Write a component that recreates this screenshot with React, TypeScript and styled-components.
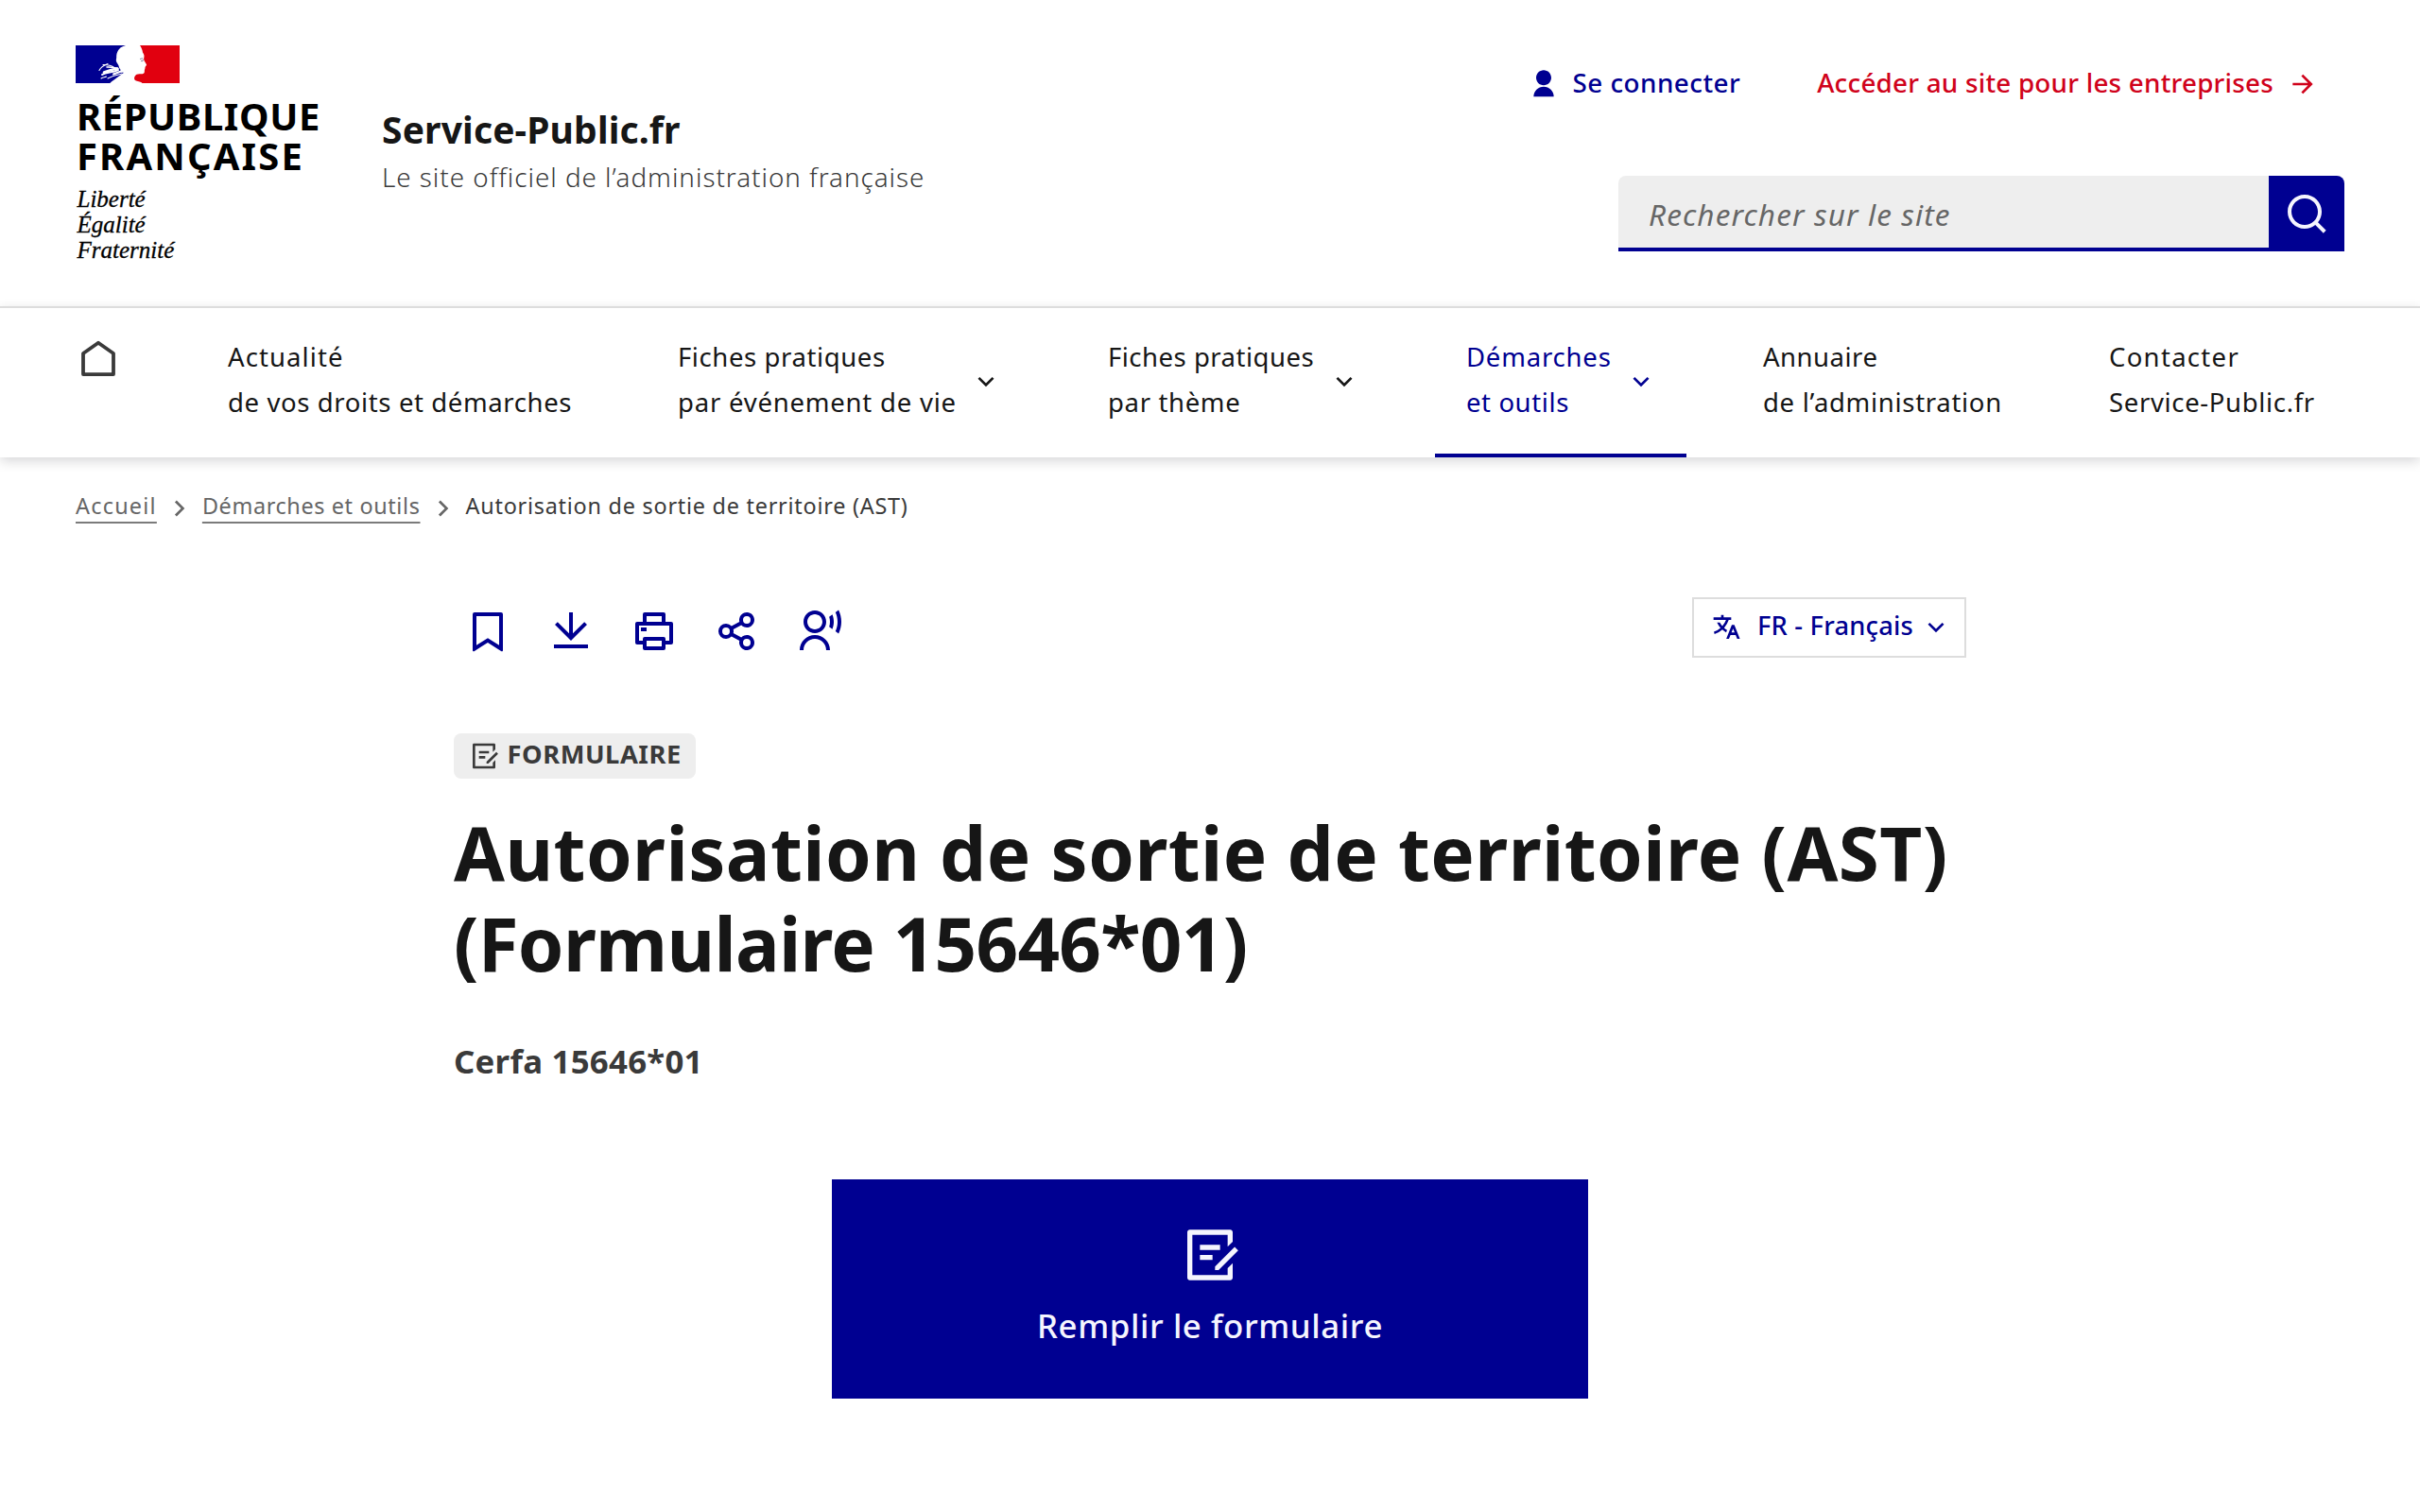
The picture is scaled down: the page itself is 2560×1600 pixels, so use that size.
import React from 'react';
import styled, { createGlobalStyle } from 'styled-components';

const BLUE = '#000091';
const RED = '#d0021b';
const INK = '#161616';
const GREY = '#3a3a3a';

const GlobalStyle = createGlobalStyle`
  *, *::before, *::after { box-sizing: border-box; }
  body {
    margin: 0;
    background: #fff;
    color: ${INK};
    font-family: "Noto Sans", "Open Sans", sans-serif;
    font-size: 27.5px;
    line-height: 48px;
  }
  a { color: inherit; text-decoration: none; }
`;

const Page = styled.div`
  width: 2560px;
  min-height: 1600px;
  background: #fff;
`;

/* ---------- icons ---------- */

const Svg = styled.svg<{ $size: number }>`
  display: block;
  flex: none;
  width: ${(p) => p.$size}px;
  height: ${(p) => p.$size}px;
  fill: currentColor;
`;

const PATHS = {
  user: 'M4 22a8 8 0 1 1 16 0H4Zm8-9c-3.315 0-6-2.685-6-6s2.685-6 6-6 6 2.685 6 6-2.685 6-6 6Z',
  arrow: 'm16.17 11-5.36-5.36 1.41-1.42L20 12l-7.78 7.78-1.41-1.42L16.17 13H4v-2h12.17Z',
  search:
    'M18.031 16.617l4.283 4.282-1.415 1.415-4.282-4.283A8.96 8.96 0 0 1 11 20c-4.968 0-9-4.032-9-9s4.032-9 9-9 9 4.032 9 9a8.96 8.96 0 0 1-1.969 5.617zm-2.006-.742A6.977 6.977 0 0 0 18 11c0-3.868-3.133-7-7-7-3.868 0-7 3.132-7 7 0 3.867 3.132 7 7 7a6.977 6.977 0 0 0 4.875-1.975l.15-.15z',
  down: 'M12 13.17l4.95-4.95 1.41 1.42L12 16 5.64 9.64l1.41-1.42L12 13.17Z',
  right: 'M13.17 12L8.22 7.05l1.42-1.41L16 12l-6.36 6.36-1.42-1.41L13.17 12Z',
  bookmark:
    'M5 2h14a1 1 0 0 1 1 1v19.143a.5.5 0 0 1-.766.424L12 18.03l-7.234 4.536A.5.5 0 0 1 4 22.143V3a1 1 0 0 1 1-1zm13 2H6v15.432l6-3.761 6 3.761V4z',
  download: 'M3 19h18v2H3v-2Zm10-5.828 6.071-6.071 1.414 1.414L12 17 3.515 8.515 4.929 7.1 11 13.17V2h2v11.172Z',
  printer:
    'M6 19H3a1 1 0 0 1-1-1V8a1 1 0 0 1 1-1h3V3a1 1 0 0 1 1-1h10a1 1 0 0 1 1 1v4h3a1 1 0 0 1 1 1v10a1 1 0 0 1-1 1h-3v2a1 1 0 0 1-1 1H7a1 1 0 0 1-1-1v-2zm0-2v-1a1 1 0 0 1 1-1h10a1 1 0 0 1 1 1v1h2V9H4v8h2zM8 4v3h8V4H8zm0 13v3h8v-3H8zm-3-7h3v2H5v-2z',
  share:
    'M13.12 17.023l-4.199-2.29a4 4 0 1 1 0-5.465l4.2-2.29a4 4 0 1 1 .959 1.755l-4.2 2.29a4.008 4.008 0 0 1 0 1.954l4.199 2.29a4 4 0 1 1-.959 1.755zM6 14a2 2 0 1 0 0-4 2 2 0 0 0 0 4zm11-6a2 2 0 1 0 0-4 2 2 0 0 0 0 4zm0 12a2 2 0 1 0 0-4 2 2 0 0 0 0 4z',
  voice:
    'M1 22C1 17.582 4.582 14 9 14s8 3.582 8 8h-2c0-3.314-2.686-6-6-6s-6 2.686-6 6H1Zm8-9c-3.315 0-6-2.685-6-6s2.685-6 6-6 6 2.685 6 6-2.685 6-6 6Zm0-2c2.21 0 4-1.79 4-4s-1.79-4-4-4-4 1.79-4 4 1.79 4 4 4ZM21.548.784C22.477 2.65 23 4.764 23 7s-.523 4.35-1.452 6.216L19.903 12.02C20.607 10.494 21 8.793 21 7s-.393-3.494-1.097-5.02L21.548.784ZM18.246 3.185C18.733 4.36 19 5.649 19 7s-.267 2.64-.754 3.815l-1.675-1.218C16.848 8.783 17 7.909 17 7s-.152-1.783-.429-2.597l1.675-1.218Z',
  translate:
    'M18.5 10l4.4 11h-2.155l-1.201-3h-4.09l-1.199 3h-2.154L16.5 10h2zM10 2v2h6v2h-1.968a18.222 18.222 0 0 1-3.62 6.301 14.864 14.864 0 0 0 2.336 1.707l-.751 1.878A17.015 17.015 0 0 1 9 13.725a16.676 16.676 0 0 1-6.201 3.548l-.536-1.929a14.7 14.7 0 0 0 5.327-3.042A18.078 18.078 0 0 1 4.767 8h2.24A16.032 16.032 0 0 0 9 10.877a16.165 16.165 0 0 0 2.91-4.876L2 6V4h6V2h2zm7.5 10.885L16.253 16h2.492L17.5 12.885z',
  draft:
    'M20 2C20.552 2 21 2.448 21 3V6.757L19 8.757V4H5V20H19V17.242L21 15.242V21C21 21.552 20.552 22 20 22H4C3.448 22 3 21.552 3 21V3C3 2.448 3.448 2 4 2H20ZM21.778 8.808L23.192 10.222L15.414 18L13.998 17.998L14 16.586L21.778 8.808ZM13 12V14H8V12H13ZM16 8V10H8V8H16Z',
};

type IconName = keyof typeof PATHS;

const Icon = ({ name, size = 32 }: { name: IconName; size?: number }) => (
  <Svg $size={size} viewBox="0 0 24 24" aria-hidden="true">
    <path d={PATHS[name]} />
  </Svg>
);

/* ---------- header ---------- */

const Header = styled.header`
  display: flex;
  align-items: flex-start;
  height: 324px;
  padding: 48px 80px 0;
`;

const LogoBlock = styled.div`
  width: 324px;
`;

const Flag = styled.svg`
  display: block;
  width: 110px;
  height: 40px;
  margin-bottom: 13.5px;
`;

const StateName = styled.p`
  margin: 0;
  padding-left: 1px;
  color: #000;
  font-size: 39.9px;
  font-weight: 700;
  line-height: 42px;
`;

const Tracked = styled.span<{ $ls: number }>`
  letter-spacing: ${(p) => p.$ls}px;
`;

const Motto = styled.p`
  margin: 11px 0 0;
  padding-left: 1.5px;
  color: #000;
  font-family: "Liberation Serif", "Times New Roman", serif;
  font-size: 25px;
  font-style: italic;
  font-weight: 400;
  line-height: 27px;
  -webkit-text-stroke: 0.3px #000;
`;

const Service = styled.div`
  padding-top: 61px;
`;

const ServiceName = styled.p`
  margin: 0;
  font-size: 39px;
  font-weight: 700;
  line-height: 56px;
  letter-spacing: 0.15px;
`;

const Tagline = styled.p`
  margin: 0;
  color: ${GREY};
  font-size: 27.8px;
  font-weight: 300;
  line-height: 44px;
  letter-spacing: 0.98px;
`;

const Tools = styled.div`
  display: flex;
  flex-direction: column;
  width: 768px;
  margin-left: auto;
  padding-top: 15px;
`;

const ToolLinks = styled.div`
  display: flex;
  justify-content: flex-end;
  gap: 81px;
  padding-right: 28px;
`;

const ToolLink = styled.a<{ $color: string; $ls: number }>`
  display: flex;
  align-items: center;
  gap: 15px;
  color: ${(p) => p.$color};
  font-size: 27.8px;
  font-weight: 500;
  line-height: 48px;
  letter-spacing: ${(p) => p.$ls}px;
  white-space: nowrap;

  svg { margin-top: 4px; }
`;

const Search = styled.form`
  display: flex;
  height: 80px;
  margin-top: 75px;
`;

const SearchInput = styled.input`
  flex: 1;
  min-width: 0;
  padding: 0 32px;
  border: 0;
  border-radius: 8px 0 0 0;
  background: #eee;
  box-shadow: inset 0 -4px 0 0 ${BLUE};
  color: ${GREY};
  font: italic 400 31.5px "Noto Sans", sans-serif;
  letter-spacing: 1.1px;

  &::placeholder { color: #666; opacity: 1; }
`;

const SearchButton = styled.button`
  display: flex;
  align-items: center;
  justify-content: center;
  width: 80px;
  padding: 0;
  border: 0;
  border-radius: 0 8px 0 0;
  background: ${BLUE};
  color: #f5f5fe;
`;

/* ---------- navigation ---------- */

const Nav = styled.nav`
  display: grid;
  grid-template-columns: 112px 428px 407px 331px 266px 318px 282px;
  column-gap: 48px;
  height: 160px;
  padding-left: 48px;
  border-top: 2px solid #ddd;
  box-shadow: 0 4px 12px rgba(0, 0, 18, 0.16);
`;

const NavItem = styled.a<{ $active?: boolean }>`
  display: flex;
  justify-content: space-between;
  padding: 28px 32px 0 33px;
  color: ${(p) => (p.$active ? BLUE : INK)};
  box-shadow: ${(p) => (p.$active ? `inset 0 -4px 0 0 ${BLUE}` : 'none')};
  white-space: nowrap;

  svg { margin-top: 34px; }
`;

const HomeItem = styled.a`
  display: flex;
  justify-content: center;
  padding-top: 32px;
`;

const HomeGlyph = styled.svg`
  width: 40px;
  height: 42px;
  fill: none;
  stroke: ${GREY};
  stroke-width: 3.8;
  stroke-linejoin: round;
`;

/* ---------- breadcrumb ---------- */

const Breadcrumb = styled.nav`
  display: flex;
  align-items: center;
  gap: 8px;
  padding: 31px 80px 0;
  color: #666;
  font-size: 23.4px;
  line-height: 40px;

  svg { margin-top: 6px; }
`;

const Crumb = styled.a<{ $ls: number }>`
  letter-spacing: ${(p) => p.$ls}px;
  text-decoration: underline;
  text-decoration-thickness: 2px;
  text-decoration-color: #7b7b7b;
  text-underline-offset: 8px;
  text-decoration-skip-ink: none;
`;

const CurrentCrumb = styled.span`
  color: ${GREY};
  letter-spacing: 0.76px;
`;

/* ---------- main ---------- */

const Main = styled.main`
  display: flex;
  flex-direction: column;
  align-items: flex-start;
  width: 1600px;
  margin: 0 auto;
  padding-top: 77px;
`;

const Toolbar = styled.div`
  display: flex;
  align-items: flex-start;
  justify-content: space-between;
  width: 100%;
  height: 64px;
`;

const Actions = styled.div`
  display: flex;
  gap: 40px;
  padding: 12px 0 0 12px;
  color: ${BLUE};
`;

const ActionButton = styled.button`
  display: block;
  padding: 0;
  border: 0;
  background: none;
  color: inherit;
`;

const Language = styled.button`
  display: flex;
  align-items: center;
  justify-content: space-between;
  width: 290px;
  height: 64px;
  padding: 0 14px 0 18px;
  border: 2px solid #ddd;
  background: #fff;
  color: ${BLUE};
  font: 500 27.3px "Noto Sans", sans-serif;
  letter-spacing: 0.2px;
`;

const LanguageLabel = styled.span`
  padding: 0 0 5px 9px;
`;

const Badge = styled.p`
  display: flex;
  align-items: center;
  gap: 8px;
  width: 256px;
  height: 48px;
  margin: 80px 0 0;
  padding-left: 16px;
  border-radius: 8px;
  background: #eee;
  color: ${GREY};
  font-size: 27.3px;
  font-weight: 700;
  letter-spacing: 0.55px;
`;

const BadgeLabel = styled.span`
  padding: 0 0 4px 0.5px;
`;

const Title = styled.h1`
  margin: 30px 0 0;
  font-size: 78px;
  font-weight: 700;
  line-height: 96px;
  white-space: nowrap;
`;

const Reference = styled.p`
  margin: 49px 0 0;
  color: ${GREY};
  font-size: 34.8px;
  font-weight: 700;
  line-height: 56px;
  letter-spacing: 0.25px;
`;

const FormButton = styled.a`
  display: flex;
  flex-direction: column;
  align-items: center;
  align-self: center;
  gap: 15px;
  width: 800px;
  height: 232px;
  margin-top: 97px;
  padding-top: 48px;
  background: ${BLUE};
  color: #f5f5fe;
  font-size: 34.8px;
  font-weight: 500;
  line-height: 56px;
  letter-spacing: 0.6px;
`;

const MENU = [
  { lines: ['Actualité', 'de vos droits et démarches'], tracking: [1.1, 0.62] },
  { lines: ['Fiches pratiques', 'par événement de vie'], tracking: [0.6, 0.78], menu: true },
  { lines: ['Fiches pratiques', 'par thème'], tracking: [0.5, 0.65], menu: true },
  { lines: ['Démarches', 'et outils'], tracking: [0.8, 0.6], menu: true, active: true },
  { lines: ['Annuaire', 'de l’administration'], tracking: [0.5, 0.7] },
  { lines: ['Contacter', 'Service-Public.fr'], tracking: [1.3, 0.65] },
];

const ACTIONS: IconName[] = ['bookmark', 'download', 'printer', 'share', 'voice'];

export default function App() {
  return (
    <Page>
      <GlobalStyle />
      <Header>
        <LogoBlock>
          <Flag viewBox="0 0 110 40" aria-label="République Française">
            <path fill="#fff" d="M0 0h110v40H0z" />
            <path
              fill={BLUE}
              d="M0 0h53c-3 1-5 1.500-6.500 3.500-2 2-3 4.500-3.300 7.500.3 3-1 4.500 0 6.500.5 1.500 2.300 2.500 2.600 5 .2 2.500 3 3 1.500 6 1.500.8 3-.2 3.500.5-2.500 2-5 3.500-7.500 5.500-2 1.800-4.500 3-7 5.500H0z"
            />
            <g fill="none" stroke="#fff" strokeWidth="1.100" strokeLinecap="round">
              <path d="M25 26.500c1.500-3.500 5-5.500 9-7" />
              <path d="M29 20.500c4 .2 8 .3 11 2.500" />
              <path d="M28 31c5-3.500 10-1.500 17-5" strokeWidth="2" />
              <path d="M30 28.500c4-1.500 8-3 14-4" strokeWidth="2.600" />
              <path d="M33 23c3-.5 7 .5 12 1.500" strokeWidth="1.500" />
              <path d="M27 35c2-1.500 4-1 5.500-2" />
              <path d="M34 35c4-2 8-3.500 15-5" />
              <path d="M40 30.500l8-3" strokeWidth="2" />
            </g>
            <path
              fill="#e1000f"
              d="M68 0h42v40H70.500c-1.500-1.500-4-2-6.500-2.500-2.500-.8-2-3.500-1.500-4.500 1-2.500 3.500-3 6-2.800 2.500.2 4-.2 4.300-2 .2-1.500-.2-2.500.7-3.500-.5-.6-.2-1.200.3-1.800-.5-1 1.400-1.200 1.300-2.200-.3-1.800-2.500-3.700-3-6 .1-1.700.7-2.700.2-4.700-.6-2-2-2.500-1.500-3.700C70.300 4.500 69.500 2 68 0z"
            />
            <path fill="none" stroke="#8c8ca8" strokeWidth="1" d="M68 14.500l3-.8M69 16.500l2 .2.300-2" />
          </Flag>
          <StateName>
            <Tracked $ls={0.6}>RÉPUBLIQUE</Tracked>
            <br />
            <Tracked $ls={2.2}>FRANÇAISE</Tracked>
          </StateName>
          <Motto>
            Liberté
            <br />
            Égalité
            <br />
            Fraternité
          </Motto>
        </LogoBlock>
        <Service>
          <ServiceName>Service-Public.fr</ServiceName>
          <Tagline>Le site officiel de l’administration française</Tagline>
        </Service>
        <Tools>
          <ToolLinks>
            <ToolLink href="#" $color={BLUE} $ls={0.48}>
              <Icon name="user" />
              Se connecter
            </ToolLink>
            <ToolLink href="#" $color={RED} $ls={0.23}>
              Accéder au site pour les entreprises
              <Icon name="arrow" />
            </ToolLink>
          </ToolLinks>
          <Search>
            <SearchInput placeholder="Rechercher sur le site" />
            <SearchButton type="button" aria-label="Rechercher">
              <Icon name="search" size={48} />
            </SearchButton>
          </Search>
        </Tools>
      </Header>

      <Nav>
        <HomeItem href="#" aria-label="Accueil">
          <HomeGlyph viewBox="0 0 40 42">
            <path d="M4 38.100V16L20 4.800 36 16v22.100z" />
          </HomeGlyph>
        </HomeItem>
        {MENU.map((item) => (
          <NavItem href="#" key={item.lines.join()} $active={item.active}>
            <span>
              <Tracked $ls={item.tracking[0]}>{item.lines[0]}</Tracked>
              <br />
              <Tracked $ls={item.tracking[1]}>{item.lines[1]}</Tracked>
            </span>
            {item.menu && <Icon name="down" />}
          </NavItem>
        ))}
      </Nav>

      <Breadcrumb>
        <Crumb href="#" $ls={1.25}>Accueil</Crumb>
        <Icon name="right" />
        <Crumb href="#" $ls={0.63}>Démarches et outils</Crumb>
        <Icon name="right" />
        <CurrentCrumb>Autorisation de sortie de territoire (AST)</CurrentCrumb>
      </Breadcrumb>

      <Main>
        <Toolbar>
          <Actions>
            {ACTIONS.map((name) => (
              <ActionButton key={name} aria-label={name}>
                <Icon name={name} size={48} />
              </ActionButton>
            ))}
          </Actions>
          <Language>
            <Icon name="translate" />
            <LanguageLabel>FR - Français</LanguageLabel>
            <Icon name="down" />
          </Language>
        </Toolbar>

        <Badge>
          <Icon name="draft" />
          <BadgeLabel>FORMULAIRE</BadgeLabel>
        </Badge>
        <Title>
          <Tracked $ls={0.45}>Autorisation de sortie de territoire (AST)</Tracked>
          <br />
          <Tracked $ls={-0.7}>(Formulaire 15646*01)</Tracked>
        </Title>
        <Reference>Cerfa 15646*01</Reference>
        <FormButton href="#">
          <Icon name="draft" size={64} />
          Remplir le formulaire
        </FormButton>
      </Main>
    </Page>
  );
}
